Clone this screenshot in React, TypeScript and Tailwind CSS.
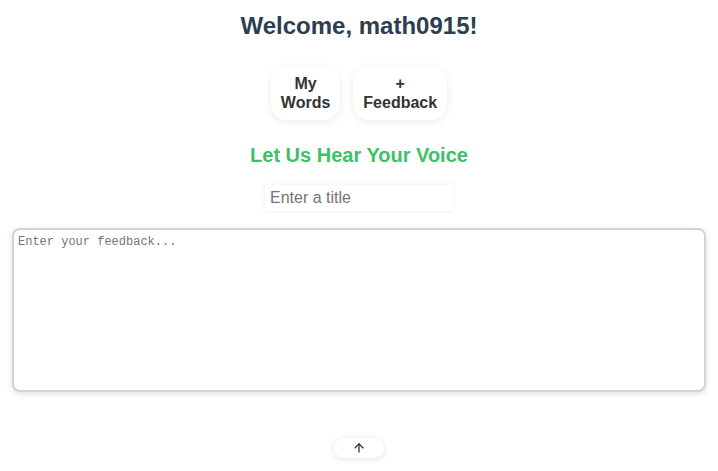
import React from 'react';
import { ArrowUp } from 'lucide-react';

export default function App() {
  return (
    <div className="min-h-[471px] bg-white px-3 pt-3 font-['Liberation_Sans',Arial,sans-serif]">
      <h1 className="text-center text-[24px] font-bold leading-[28px] text-[#2c3e50]">Welcome, math0915!</h1>

      <div className="mt-[26px] flex justify-center gap-[13px]">
        <button className="rounded-2xl bg-white px-[10px] py-2 text-[16px] font-bold leading-[19px] text-[#333] shadow-[0_2px_8px_rgba(0,0,0,0.08)]">
          My
          <br />
          Words
        </button>
        <button className="rounded-2xl bg-white px-[10px] py-2 text-[16px] font-bold leading-[19px] text-[#333] shadow-[0_2px_8px_rgba(0,0,0,0.08)]">
          +
          <br />
          Feedback
        </button>
      </div>

      <h2 className="mt-6 text-center text-[20px] font-bold leading-[23px] text-[#3cc266]">Let Us Hear Your Voice</h2>

      <div className="mt-[18px] flex justify-center">
        <input
          placeholder="Enter a title"
          className="h-[26px] w-[188px] bg-white px-[5px] text-[16px] text-[#333] shadow-[0_0_5px_rgba(0,0,0,0.08)] outline-none placeholder:text-[#757575]"
        />
      </div>

      <textarea
        placeholder="Enter your feedback..."
        className="mt-[17px] block h-[164px] w-full resize-none rounded-lg border-2 border-[#d2d3da] bg-white px-1 py-[5px] font-['Liberation_Mono',monospace] text-[12px] leading-[15px] text-[#333] shadow-[0_2px_6px_rgba(0,0,0,0.12)] outline-none placeholder:text-[#757575]"
      />

      <div className="mt-[46px] flex justify-center">
        <button className="flex h-5 w-[50px] items-center justify-center rounded-full bg-white text-[#222] shadow-[0_1px_6px_rgba(0,0,0,0.12)]">
          <ArrowUp size={14} strokeWidth={2} />
        </button>
      </div>
    </div>
  );
}
